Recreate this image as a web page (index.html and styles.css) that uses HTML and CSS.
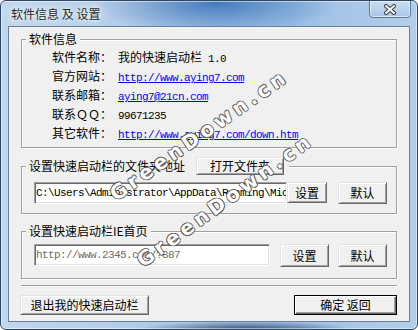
FILE: index.html
```html
<!DOCTYPE html>
<html lang="zh-CN">
<head>
<meta charset="UTF-8">
<title>软件信息 及 设置</title>
<link rel="stylesheet" href="styles.css">
</head>
<body>
  <div class="window">
    <div class="titlebar">
      <span class="title">软件信息 及 设置</span>
      <button class="close" aria-label="关闭">
        <svg width="14" height="11" viewBox="0 0 14 11">
          <path d="M3 2 L11 9 M11 2 L3 9" stroke="#3b3b3b" stroke-width="4" stroke-linecap="round"/>
          <path d="M3 2 L11 9 M11 2 L3 9" stroke="#fff" stroke-width="2" stroke-linecap="round"/>
        </svg>
      </button>
    </div>
    <div class="client">
      <fieldset class="group info">
        <legend>软件信息</legend>
        <div class="rows">
          <span>软件名称：</span><span>我的快速启动栏<span class="mono"> 1.0</span></span>
          <span>官方网站：</span><span><a class="mono link" href="#">http://www.aying7.com</a></span>
          <span>联系邮箱：</span><span><a class="mono link" href="#">aying7@21cn.com</a></span>
          <span>联系ＱＱ：</span><span><span class="mono">99671235</span></span>
          <span>其它软件：</span><span><a class="mono link" href="#">http://www.aying7.com/down.htm</a></span>
        </div>
      </fieldset>

      <fieldset class="group folder">
        <legend><span>设置快速启动栏的文件夹地址</span><button class="btn open">打开文件夹</button></legend>
        <div class="field-row">
          <div class="edit path">C:\Users\Administrator\AppData\Roaming\Microsoft\Internet Explorer\Quick Launch</div>
          <button class="btn set">设置</button>
          <button class="btn reset">默认</button>
        </div>
      </fieldset>

      <fieldset class="group homepage">
        <legend>设置快速启动栏IE首页</legend>
        <div class="field-row">
          <div class="edit url">http://www.2345.com/?887</div>
          <button class="btn set">设置</button>
          <button class="btn reset">默认</button>
        </div>
      </fieldset>

      <div class="separator"></div>

      <div class="actions">
        <button class="btn quit">退出我的快速启动栏</button>
        <button class="btn ok">确定 返回</button>
      </div>
    </div>
    <div class="watermark wm1">GreenDown.cn</div>
    <div class="watermark wm2">GreenDown.cn</div>
  </div>
</body>
</html>
```

FILE: styles.css
```css
* {
  box-sizing: border-box;
}
body {
  margin: 0;
  font-family: "Noto Sans CJK SC", "Noto Sans", sans-serif;
  font-size: 12px;
  color: #000;
  background: #fff;
}
.window {
  position: relative;
  width: 418px;
  height: 330px;
  display: flex;
  flex-direction: column;
  border: 1px solid #2d4766;
  border-radius: 6px;
  overflow: hidden;
  background:
    radial-gradient(120px 34px at 215px 2px, rgba(52,110,180,0.85), rgba(52,110,180,0)),
    radial-gradient(110px 9px at 245px 329px, rgba(20,40,80,0.8), rgba(20,40,80,0)),
    linear-gradient(to right, #c3d7ed, #aac7e6 45%, #9dc0e5 70%, #b4cde9);
  box-shadow: inset 0 0 0 1px rgba(255,255,255,0.5);
}
.titlebar {
  flex: none;
  height: 25px;
  display: flex;
  align-items: center;
  padding-left: 10px;
}
.title {
  line-height: 14px;
  color: #2a2a2a;
  text-shadow: 0 0 4px #fff, 0 0 8px #fff;
}
.close {
  margin-left: auto;
  margin-right: 6px;
  margin-top: -1px;
  align-self: flex-start;
  width: 42px;
  height: 18px;
  padding: 0;
  display: flex;
  align-items: center;
  justify-content: center;
  border: 1px solid #5a7ca3;
  border-radius: 0 0 4px 4px;
  background: linear-gradient(#cbddf1, #a8c6e7);
  box-shadow: inset 0 0 0 1px rgba(255,255,255,0.6);
}
.client {
  flex: 1;
  margin: 0 7px 7px 7px;
  padding: 5px 12px 0 12px;
  border: 1px solid #6a819c;
  background: #f0f0f0;
}

/* group boxes */
.group {
  margin: 0;
  padding: 0;
  min-width: 0;
  border: 1px solid #a0a0a0;
  box-shadow: inset 1px 1px #fff, 1px 1px #fff;
}
.group legend {
  margin-left: 4px;
  padding: 0 3px;
  line-height: 14px;
  background: #f0f0f0;
}
.rows {
  display: grid;
  grid-template-columns: 66px auto;
  grid-auto-rows: 19px;
  line-height: 19px;
  padding: 1px 0 5px 30px;
}
.mono {
  font-family: "Liberation Mono", monospace;
  font-size: 11px;
  letter-spacing: -0.6px;
  line-height: 1;
}
.link {
  color: #00f;
  text-decoration: underline;
}
.folder {
  margin-top: 9px;
}
.folder legend {
  display: flex;
  align-items: center;
  height: 18px;
  padding-right: 5px;
}
.folder .field-row {
  padding: 7px 0 9px 12px;
}
.homepage {
  margin-top: 10px;
}
.homepage .field-row {
  padding: 6px 0 11px 12px;
}
.field-row {
  display: flex;
  align-items: flex-start;
}

/* edits and buttons */
.edit {
  height: 22px;
  padding-left: 1px;
  border: 1px solid;
  border-color: #a0a0a0 #fff #fff #a0a0a0;
  box-shadow: inset 1px 1px #696969, inset -1px -1px #e3e3e3;
  background: #fff;
  font-family: "Liberation Mono", monospace;
  font-size: 11px;
  letter-spacing: -0.6px;
  line-height: 20px;
  white-space: nowrap;
  overflow: hidden;
}
.path {
  width: 253px;
}
.url {
  width: 236px;
  color: #6d6d6d;
}
.btn {
  padding: 0;
  font: inherit;
  color: #000;
  background: #f0f0f0;
  border: 1px solid;
  border-color: #e3e3e3 #696969 #696969 #e3e3e3;
  box-shadow: inset 1px 1px #fff, inset -1px -1px #a0a0a0;
  line-height: 14px;
}
.open {
  width: 88px;
  height: 18px;
  margin-left: 11px;
}
.folder .set {
  width: 40px;
  height: 21px;
}
.folder .reset {
  width: 49px;
  height: 22px;
  margin-left: 11px;
}
.homepage .set {
  width: 49px;
  height: 23px;
  margin-left: 10px;
}
.homepage .reset {
  width: 49px;
  height: 23px;
  margin-left: 9px;
}
.separator {
  margin-top: 6px;
  height: 2px;
  border-top: 1px solid #a0a0a0;
  border-bottom: 1px solid #fff;
}
.actions {
  display: flex;
  justify-content: space-between;
  margin-top: 8px;
}
.quit {
  width: 129px;
  height: 20px;
  margin-left: -1px;
}
.ok {
  width: 103px;
  height: 20px;
  border-color: #000;
  box-shadow: inset 1px 1px #fff, inset -1px -1px #696969, inset -2px -2px #a0a0a0;
}

/* watermark drawn over the dialog */
.watermark {
  position: absolute;
  font-family: "DejaVu Sans", sans-serif;
  font-weight: bold;
  font-size: 20px;
  letter-spacing: 4px;
  white-space: nowrap;
  color: #fff;
  text-shadow: 1px 0 #555, -1px 0 #555, 0 1px #555, 0 -1px #555;
  pointer-events: none;
}
.wm1 {
  left: 198px;
  top: 134px;
  transform: translate(-50%, -50%) rotate(-35deg);
}
.wm2 {
  left: 224px;
  top: 199px;
  transform: translate(-50%, -50%) rotate(-36deg);
}
```
